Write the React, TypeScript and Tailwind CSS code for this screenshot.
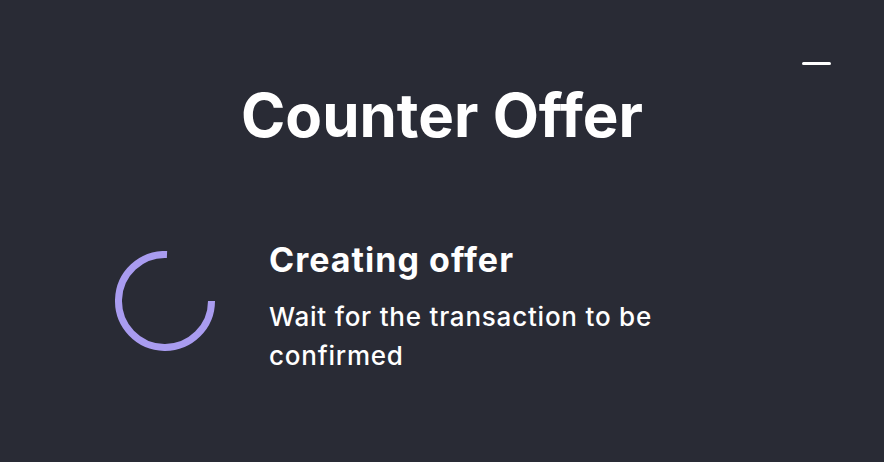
export default function App() {
  return (
    <div className="w-[884px] h-[462px] bg-[#292b35] text-white flex flex-col" style={{ fontFamily: 'Inter, "Noto Sans", sans-serif' }}>
      <div className="flex justify-end pt-[62px] pr-[53px] h-[66px]">
        <div className="w-[29px] h-[3px] bg-white rounded-sm" />
      </div>
      <h1 className="text-center text-[60px] font-bold leading-none mt-[19px]">Counter Offer</h1>
      <div className="flex items-start gap-[54px] pl-[115px] mt-[94px]">
        <svg width="100" height="100" viewBox="0 0 100 100" className="shrink-0 mt-[12px]">
          <path
            d="M52 3.5 A46.5 46.5 0 1 0 96.5 50"
            fill="none"
            stroke="#a99cf0"
            strokeWidth="7"
          />
        </svg>
        <div className="w-[420px]">
          <h2 className="text-[34px] font-bold leading-tight tracking-[0.03em]">Creating offer</h2>
          <p className="text-[26px] font-medium leading-[39px] tracking-[0.03em] mt-[15px]">Wait for the transaction to be confirmed</p>
        </div>
      </div>
    </div>
  )
}
